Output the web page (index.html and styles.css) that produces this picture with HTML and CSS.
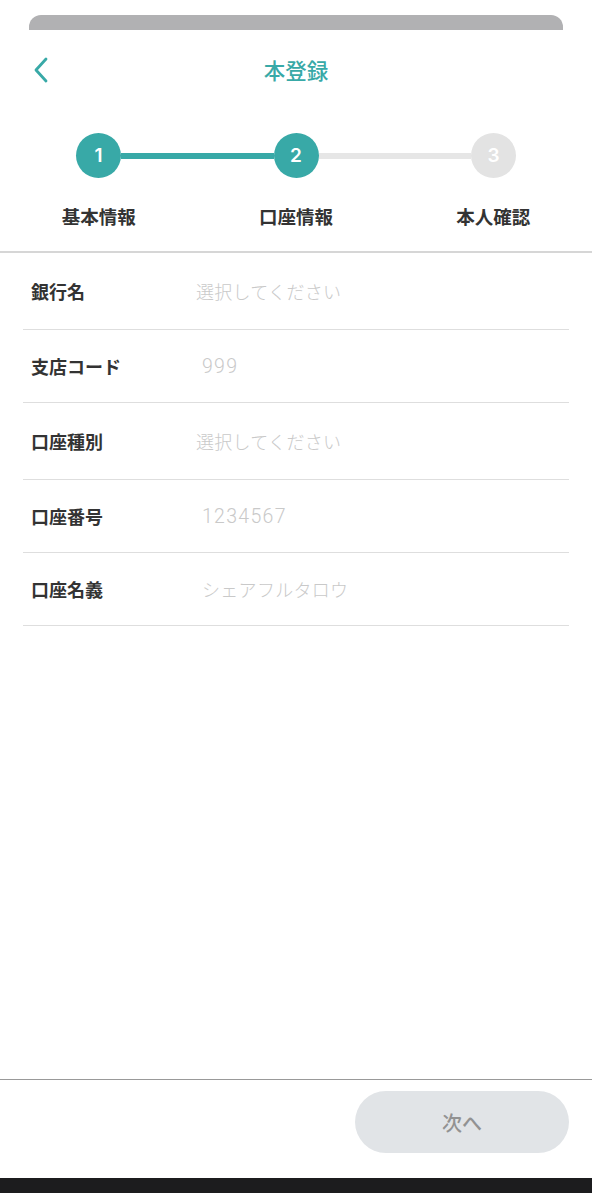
FILE: index.html
```html
<!DOCTYPE html>
<html lang="ja">
<head>
<meta charset="utf-8">
<title>本登録</title>
<link rel="stylesheet" href="styles.css">
</head>
<body>
<div class="screen">
  <div class="sheet-edge"></div>
  <header class="topbar">
    <div class="back">
      <svg width="16" height="26" viewBox="0 0 16 26" aria-hidden="true">
        <polyline points="13,2 3,13 13,24" fill="none" stroke="#38a9a7" stroke-width="2.8" stroke-linecap="round" stroke-linejoin="round"/>
      </svg>
    </div>
    <h1 class="title">本登録</h1>
    <div></div>
  </header>

  <div class="stepper">
    <div class="dot done">1</div>
    <div class="bar done"></div>
    <div class="dot done">2</div>
    <div class="bar"></div>
    <div class="dot">3</div>
  </div>
  <div class="step-labels">
    <div>基本情報</div>
    <div>口座情報</div>
    <div>本人確認</div>
  </div>

  <main class="form">
    <div class="row tall">
      <div class="label">銀行名</div>
      <div class="value">選択してください</div>
    </div>
    <div class="row">
      <div class="label">支店コード</div>
      <div class="value input num">999</div>
    </div>
    <div class="row tall">
      <div class="label">口座種別</div>
      <div class="value">選択してください</div>
    </div>
    <div class="row">
      <div class="label">口座番号</div>
      <div class="value input num">1234567</div>
    </div>
    <div class="row">
      <div class="label">口座名義</div>
      <div class="value input">シェアフルタロウ</div>
    </div>
  </main>

  <footer class="footer">
    <button class="next" type="button">次へ</button>
  </footer>
  <div class="home-bar"></div>
</div>
</body>
</html>
```

FILE: styles.css
```css
* { box-sizing: border-box; }

html, body {
  margin: 0;
  padding: 0;
  background: #ffffff;
}

body {
  font-family: "Noto Sans CJK JP", "Noto Sans", sans-serif;
  color: #333333;
}

.screen {
  height: 100vh;
  display: flex;
  flex-direction: column;
}

.sheet-edge {
  margin: 15px 29px 0;
  height: 15px;
  background: #b1b1b3;
  border-radius: 12px 12px 0 0;
  flex: none;
}

.topbar {
  height: 80px;
  display: grid;
  grid-template-columns: 1fr auto 1fr;
  align-items: center;
  flex: none;
}

.back {
  padding-left: 33px;
  display: flex;
  align-items: center;
  height: 26px;
}

.title {
  margin: 0;
  font-size: 21.5px;
  font-weight: 500;
  color: #38a9a7;
  line-height: 28px;
}

.stepper {
  margin-top: 23px;
  padding: 0 76px;
  display: flex;
  align-items: center;
  flex: none;
}

.dot {
  width: 45px;
  height: 45px;
  border-radius: 50%;
  background: #e3e3e3;
  color: #ffffff;
  font-family: "Inter", "Noto Sans", sans-serif;
  font-size: 19px;
  font-weight: 600;
  display: flex;
  align-items: center;
  justify-content: center;
  flex: none;
}

.dot.done {
  background: #38a9a7;
}

.bar {
  flex: 1;
  height: 6px;
  background: #e6e6e6;
}

.bar.done {
  background: #38a9a7;
}

.step-labels {
  margin-top: 25px;
  display: grid;
  grid-template-columns: repeat(3, 1fr);
  text-align: center;
  font-size: 18.5px;
  font-weight: 700;
  line-height: 26px;
  color: #333333;
  padding-bottom: 22px;
  border-bottom: 2px solid #d6d6d6;
  flex: none;
}

.form {
  margin: 0 23px;
  flex: 1;
}

.row {
  height: 73px;
  display: flex;
  align-items: center;
  border-bottom: 1.5px solid #dedede;
}

.row.tall {
  height: 77px;
}

.label {
  width: 173px;
  padding-left: 8px;
  font-size: 18px;
  font-weight: 700;
  color: #333333;
  flex: none;
}

.value {
  font-size: 18px;
  font-weight: 300;
  color: #c9c9c9;
  letter-spacing: 0.3px;
}

.value.input {
  padding-left: 6px;
}

.value.num {
  font-family: "Roboto", "Noto Sans", sans-serif;
  font-size: 19.5px;
  letter-spacing: 1.3px;
}

.footer {
  border-top: 1.5px solid #999999;
  padding: 11px 23px 25px;
  display: flex;
  justify-content: flex-end;
  flex: none;
}

.next {
  width: 214px;
  height: 62px;
  border: none;
  border-radius: 31px;
  background: #e1e4e7;
  color: #929292;
  font-family: "Noto Sans CJK JP", sans-serif;
  font-size: 20px;
  font-weight: 500;
}

.home-bar {
  height: 15px;
  background: #1c1c1e;
  flex: none;
}
```
